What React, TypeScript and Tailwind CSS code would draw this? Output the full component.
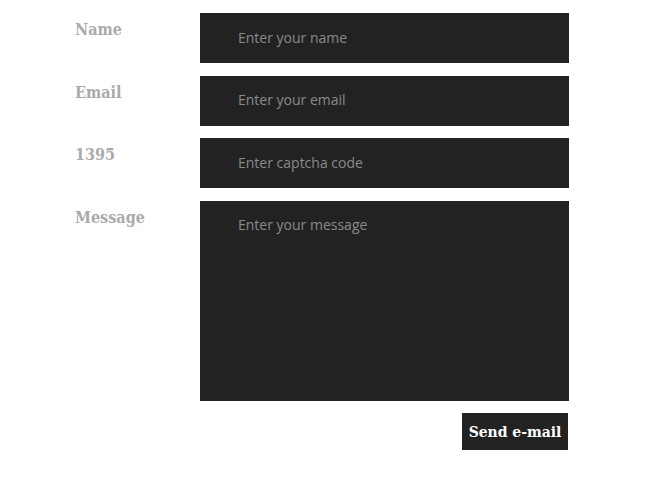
export default function App() {
  const fields = [
    { label: "Name", placeholder: "Enter your name" },
    { label: "Email", placeholder: "Enter your email" },
    { label: "1395", placeholder: "Enter captcha code" },
  ];
  const labelFont = { fontFamily: '"DejaVu Serif Condensed", "DejaVu Serif", serif' };
  return (
    <main className="min-h-[481px] bg-white pl-[75px] pt-[13px]">
      <form className="flex w-[494px] flex-col gap-[12.5px]">
        {fields.map((f) => (
          <div key={f.label} className="flex">
            <label
              className="w-[125px] pt-[5px] text-[16px] font-bold text-[#aaaaaa]"
              style={labelFont}
            >
              {f.label}
            </label>
            <input
              placeholder={f.placeholder}
              className="h-[50px] w-[369px] bg-[#222222] pb-[2px] pl-[38px] font-['Open_Sans',sans-serif] text-[14px] text-[#cccccc] outline-none placeholder:text-[#8a8a8a]"
            />
          </div>
        ))}
        <div className="flex">
          <label
            className="w-[125px] pt-[5px] text-[16px] font-bold text-[#aaaaaa]"
            style={labelFont}
          >
            Message
          </label>
          <textarea
            placeholder="Enter your message"
            className="h-[200px] w-[369px] resize-none bg-[#222222] pl-[38px] pt-[13px] font-['Open_Sans',sans-serif] text-[14px] text-[#cccccc] outline-none placeholder:text-[#8a8a8a]"
          />
        </div>
        <div className="flex justify-end">
          <button
            type="button"
            className="mr-[1px] h-[37px] w-[106px] whitespace-nowrap bg-[#222222] text-[15.5px] font-bold text-white"
            style={labelFont}
          >
            Send e-mail
          </button>
        </div>
      </form>
    </main>
  );
}
